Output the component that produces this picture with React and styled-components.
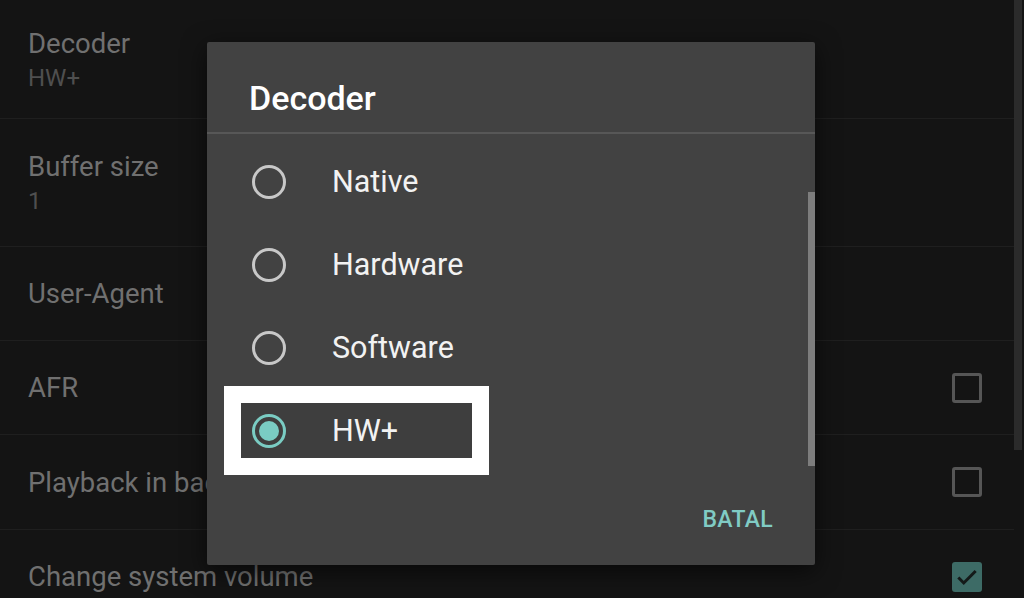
import React from "react";
import styled, { createGlobalStyle } from "styled-components";

const GlobalStyle = createGlobalStyle`
  html, body {
    margin: 0;
    padding: 0;
    background: #141414;
    font-family: Roboto, "Liberation Sans", sans-serif;
    overflow: hidden;
  }
`;

const settings = [
  { title: "Decoder", sub: "HW+", height: 119 },
  { title: "Buffer size", sub: "1", height: 128 },
  { title: "User-Agent", height: 94 },
  { title: "AFR", height: 94, box: "off" },
  { title: "Playback in background", height: 95, box: "off" },
  { title: "Change system volume", height: 94, box: "on" },
];

const options = ["Native", "Hardware", "Software", "HW+"];

const App = () => {
  return (
    <Page>
      <GlobalStyle />
      <SettingsList>
        {settings.map((s) => (
          <Row key={s.title} $height={s.height}>
            <RowText>
              <RowTitle>{s.title}</RowTitle>
              {s.sub && <RowSub>{s.sub}</RowSub>}
            </RowText>
            {s.box && (
              <Checkbox $checked={s.box === "on"}>
                {s.box === "on" && (
                  <svg width="26" height="26" viewBox="0 0 24 24">
                    <path
                      d="M4 12.5l5 5 11-11"
                      fill="none"
                      stroke="#141a19"
                      strokeWidth="2.8"
                    />
                  </svg>
                )}
              </Checkbox>
            )}
          </Row>
        ))}
      </SettingsList>
      <PageScroll />

      <Dialog>
        <DialogTitle>Decoder</DialogTitle>
        <DialogBody>
          <Options>
            {options.map((o) =>
              o === "HW+" ? (
                <Option key={o}>
                  <Highlight>
                    <Radio $checked />
                    <OptionLabel>{o}</OptionLabel>
                  </Highlight>
                </Option>
              ) : (
                <Option key={o}>
                  <Radio />
                  <OptionLabel>{o}</OptionLabel>
                </Option>
              )
            )}
          </Options>
          <DialogScroll />
        </DialogBody>
        <DialogFooter>
          <TextButton>BATAL</TextButton>
        </DialogFooter>
      </Dialog>
    </Page>
  );
};

const Page = styled.div`
  position: relative;
  width: 1024px;
  height: 598px;
  display: flex;
  background: #141414;
  overflow: hidden;
`;

const SettingsList = styled.div`
  flex: 1;
  display: flex;
  flex-direction: column;
`;

const Row = styled.div`
  flex-shrink: 0;
  height: ${(p) => p.$height}px;
  box-sizing: border-box;
  display: flex;
  align-items: center;
  padding: 0 32px 0 28px;
  border-bottom: 1px solid #1f1f1f;
`;

const RowText = styled.div`
  flex: 1;
  display: flex;
  flex-direction: column;
  gap: 4px;
`;

const RowTitle = styled.div`
  font-size: 27.5px;
  color: #707070;
  white-space: nowrap;
`;

const RowSub = styled.div`
  font-size: 24px;
  color: #4f4f4f;
`;

const Checkbox = styled.div`
  width: 30px;
  height: 30px;
  box-sizing: border-box;
  border-radius: 3px;
  border: ${(p) => (p.$checked ? "none" : "3px solid #565656")};
  background: ${(p) => (p.$checked ? "#3d6b66" : "transparent")};
  display: flex;
  align-items: center;
  justify-content: center;
`;

const PageScroll = styled.div`
  width: 8px;
  height: 450px;
  margin-right: 2px;
  background: #2b2b2b;
`;

const Dialog = styled.div`
  position: absolute;
  left: 207px;
  top: 42px;
  width: 608px;
  height: 523px;
  background: #424242;
  border-radius: 2px;
  box-shadow: 0 6px 24px rgba(0, 0, 0, 0.6);
  display: flex;
  flex-direction: column;
`;

const DialogTitle = styled.div`
  height: 92px;
  box-sizing: border-box;
  display: flex;
  align-items: center;
  padding: 22px 0 0 42px;
  font-size: 34px;
  font-weight: 500;
  color: #ffffff;
  border-bottom: 2px solid #575757;
`;

const DialogBody = styled.div`
  display: flex;
`;

const Options = styled.div`
  flex: 1;
  padding-top: 6px;
`;

const Option = styled.div`
  height: 83px;
  display: flex;
  align-items: center;
  padding-left: 45px;
`;

const Highlight = styled.div`
  display: flex;
  align-items: center;
  margin-left: -11px;
  padding-left: 11px;
  width: 231px;
  height: 55px;
  box-sizing: border-box;
  background: #3e3e3e;
  outline: 17px solid #ffffff;
`;

const Radio = styled.div`
  width: 34px;
  height: 34px;
  box-sizing: border-box;
  border-radius: 50%;
  border: 3px solid ${(p) => (p.$checked ? "#7accc3" : "#c8c8c8")};
  display: flex;
  align-items: center;
  justify-content: center;
  &::after {
    content: "";
    display: ${(p) => (p.$checked ? "block" : "none")};
    width: 20px;
    height: 20px;
    border-radius: 50%;
    background: #7accc3;
  }
`;

const OptionLabel = styled.span`
  margin-left: 46px;
  font-size: 30.5px;
  color: #f2f2f2;
`;

const DialogScroll = styled.div`
  width: 7px;
  height: 274px;
  margin-top: 58px;
  background: #7d7d7d;
`;

const DialogFooter = styled.div`
  flex: 1;
  display: flex;
  align-items: center;
  justify-content: flex-end;
  padding: 2px 42px 0 0;
`;

const TextButton = styled.span`
  font-size: 23px;
  font-weight: 500;
  color: #80cbc4;
  letter-spacing: 0.3px;
`;

export default App;
